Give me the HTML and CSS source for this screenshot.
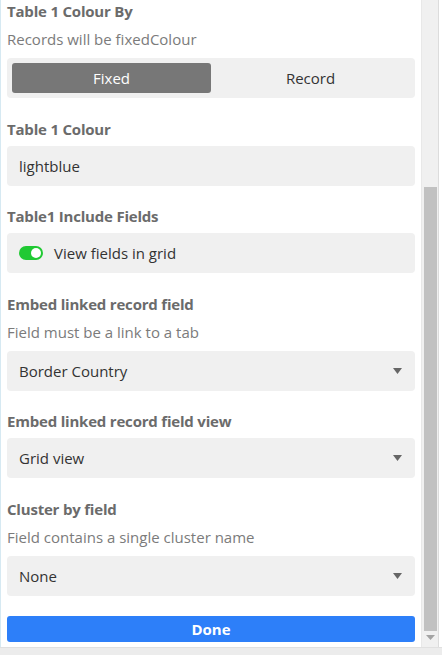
FILE: index.html
```html
<!DOCTYPE html>
<html>
<head>
<meta charset="utf-8">
<link rel="stylesheet" href="styles.css">
</head>
<body>
<div class="window">
  <div class="frame">
    <main class="panel">
      <section class="field first">
        <div class="label">Table 1 Colour By</div>
        <div class="desc">Records will be fixedColour</div>
        <div class="segmented">
          <div class="seg active">Fixed</div>
          <div class="seg">Record</div>
        </div>
      </section>
      <section class="field tight">
        <div class="label">Table 1 Colour</div>
        <div class="box">lightblue</div>
      </section>
      <section class="field">
        <div class="label">Table1 Include Fields</div>
        <div class="box">
          <span class="toggle"><span class="knob"></span></span>
          <span>View fields in grid</span>
        </div>
      </section>
      <section class="field tight">
        <div class="label">Embed linked record field</div>
        <div class="desc">Field must be a link to a tab</div>
        <div class="box select">
          <span>Border Country</span>
          <svg class="caret" width="9" height="6" viewBox="0 0 9 6"><path d="M0 0H9L4.5 6Z" fill="#666"/></svg>
        </div>
      </section>
      <section class="field">
        <div class="label">Embed linked record field view</div>
        <div class="box select">
          <span>Grid view</span>
          <svg class="caret" width="9" height="6" viewBox="0 0 9 6"><path d="M0 0H9L4.5 6Z" fill="#666"/></svg>
        </div>
      </section>
      <section class="field">
        <div class="label">Cluster by field</div>
        <div class="desc">Field contains a single cluster name</div>
        <div class="box select">
          <span>None</span>
          <svg class="caret" width="9" height="6" viewBox="0 0 9 6"><path d="M0 0H9L4.5 6Z" fill="#666"/></svg>
        </div>
      </section>
      <button class="done">Done</button>
    </main>
    <div class="scrollbar">
      <div class="thumb"></div>
      <svg class="arrow" width="9" height="5" viewBox="0 0 9 5"><path d="M0 0H9L4.5 5Z" fill="#a3a3a3"/></svg>
    </div>
    <div class="edge"></div>
  </div>
  <div class="bottom"></div>
</div>
</body>
</html>
```

FILE: styles.css
```css
* { box-sizing: border-box; }
html, body { margin: 0; padding: 0; }
body {
  width: 442px;
  height: 655px;
  overflow: hidden;
  background: #ffffff;
  font-family: "Open Sans", "Noto Sans", sans-serif;
  font-size: 15px;
  color: #333333;
}
.window { display: flex; flex-direction: column; height: 655px; }
.frame { display: flex; height: 647px; }
.panel {
  width: 421px;
  padding: 0 6px;
  display: flex;
  flex-direction: column;
  border-left: 1px solid #d6e9f2;
}
.field { display: flex; flex-direction: column; margin-bottom: 21px; }
.field.tight { margin-bottom: 20px; }
.field.first { margin-top: 1px; }
.label {
  font-weight: 700;
  color: #6b6b6b;
  font-size: 15px;
  line-height: 21px;
  margin-bottom: 6px;
  letter-spacing: -0.2px;
}
.desc {
  color: #7b7b7b;
  font-size: 15px;
  line-height: 21px;
  margin-top: 1px;
  margin-bottom: 8px;
}
.segmented {
  height: 40px;
  background: #f0f0f0;
  border-radius: 4px;
  padding: 5px;
  display: flex;
}
.seg {
  flex: 1;
  display: flex;
  align-items: center;
  justify-content: center;
  border-radius: 3px;
  color: #333;
}
.seg.active { background: #777777; color: #ffffff; }
.box {
  height: 40px;
  background: #f0f0f0;
  border-radius: 4px;
  padding: 0 12px;
  display: flex;
  align-items: center;
  gap: 11px;
}
.select { justify-content: space-between; }
.caret { margin-right: 1px; }
.toggle {
  width: 24px;
  height: 14px;
  border-radius: 7px;
  background: #20c933;
  display: flex;
  align-items: center;
  justify-content: flex-end;
  padding-right: 2px;
}
.knob { width: 10px; height: 10px; border-radius: 50%; background: #fff; }
.done {
  margin-top: -1px;
  height: 26px;
  border: 0;
  border-radius: 3px;
  background: #2d7ff9;
  color: #fff;
  font-family: inherit;
  font-weight: 700;
  font-size: 15px;
}
.scrollbar {
  width: 17px;
  background: #f0f0f0;
  display: flex;
  flex-direction: column;
  align-items: center;
  padding-top: 187px;
  border-left: 1px solid #e8e8e8;
}
.thumb { width: 13px; height: 444px; background: #c1c1c1; }
.arrow { margin-top: 4px; }
.edge { width: 4px; background: #ffffff; border-left: 1px solid #dcdcdc; }
.bottom { height: 8px; background: #ececec; border-top: 1px solid #e0e0e0; }
```
